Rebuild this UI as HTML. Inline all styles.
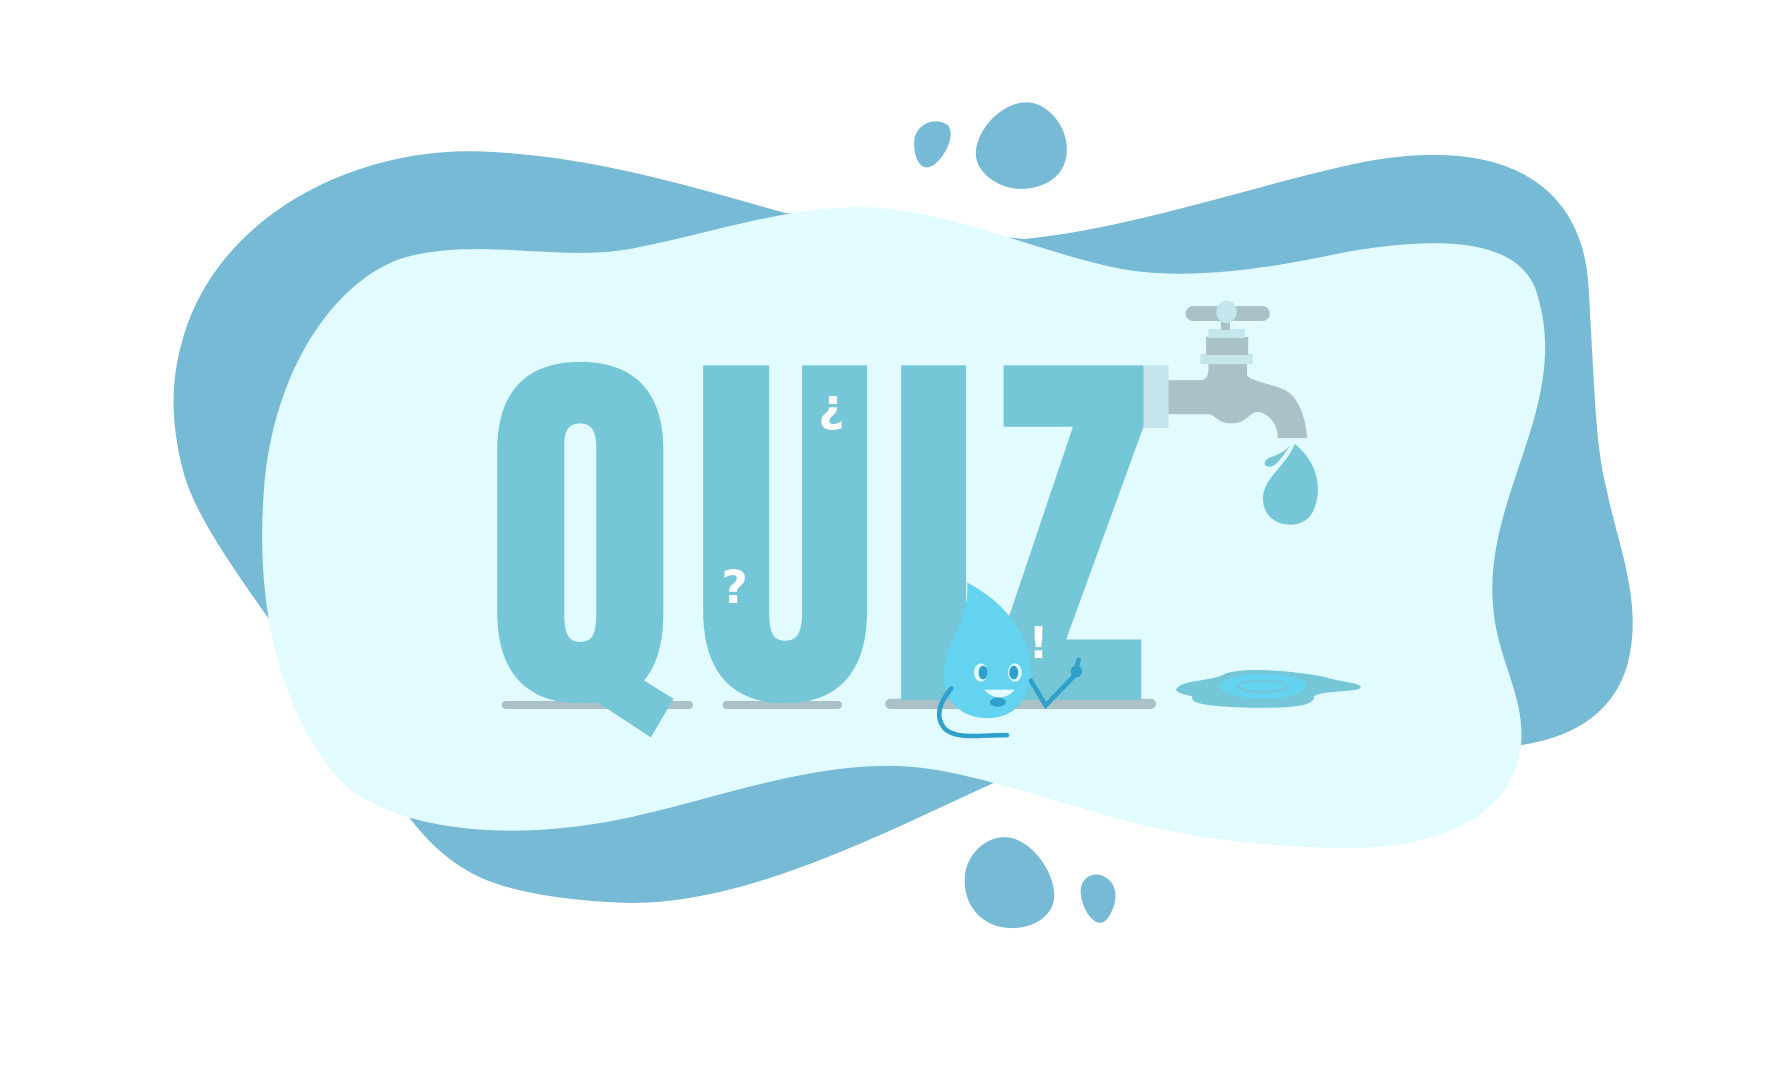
<!DOCTYPE html>
<html><head><meta charset="utf-8"><style>html,body{margin:0;padding:0;background:#fff;overflow:hidden}svg{display:block}</style></head>
<body>
<svg width="1775" height="1080" viewBox="0 0 1560 949" xmlns="http://www.w3.org/2000/svg">
<rect width="1560" height="949" fill="#fff"/>
<path fill="#77bad6" d="M160 300 C190 190 310 130 420 133 C520 136 610 165 690 187 L900 210 C1000 200 1110 160 1200 142 C1320 120 1390 160 1396 250 C1402 350 1402 390 1412 430 C1422 480 1445 530 1430 585 C1415 635 1370 650 1335 655 L880 685 C780 730 650 800 540 793 C480 790 440 780 420 770 C380 750 360 720 340 690 L230 535 C195 485 168 445 160 410 C150 370 150 335 160 300 Z"/>
<path fill="#e2fbff" d="M232 430 C240 320 300 240 360 225 C420 210 490 228 545 220 C610 210 690 180 760 182 C840 185 920 225 990 237 C1060 248 1140 230 1180 222 C1270 206 1340 210 1352 262 C1380 360 1300 440 1313 540 C1318 585 1345 620 1335 665 C1320 730 1240 748 1170 745 C1060 742 1000 725 950 710 C890 693 830 672 780 673 C700 673 620 705 545 720 C420 745 320 720 290 675 C240 610 225 520 232 430 Z"/>
<path fill="#77bad6" d="M804 120 C808 107 824 103 833 110 C842 120 825 148 814 147 C805 146 802 130 804 120 Z"/>
<path fill="#77bad6" d="M858 130 C862 108 885 88 905 90 C925 92 945 120 935 145 C927 165 895 172 875 160 C862 152 856 142 858 130 Z"/>
<path fill="#77bad6" d="M848 770 C850 748 870 733 887 736 C910 740 930 772 926 792 C922 810 900 818 882 815 C862 812 846 795 848 770 Z"/>
<path fill="#77bad6" d="M950 780 C952 770 962 766 970 770 C982 776 983 790 976 803 C970 815 962 812 956 803 C951 795 949 786 950 780 Z"/>
<g fill="#a9c1c7">
<rect x="441" y="616" width="168" height="7" rx="3.5"/>
<rect x="635" y="616" width="105" height="7" rx="3.5"/>
<rect x="778" y="614" width="238" height="9" rx="4.5"/>
</g>
<g fill="#75c6d6">
<path fill-rule="evenodd" d="M437 395 C437 345 462 318 510 318 C558 318 583 345 583 395 L583 538 C583 566 577 585 566 598 L592 614 L572 648 L525 617 C520 618 515 618 510 618 C462 618 437 590 437 538 Z M496 390 C496 378 500 372 510 372 C519 372 524 378 524 392 L524 540 C524 558 520 564 510 564 C500 564 496 558 496 540 Z"/>
<path d="M618 321 L676 321 L676 537 C676 557 680 563 690 563 C700 563 705 557 705 537 L705 321 L762 321 L762 537 C762 590 737 618 690 618 C643 618 618 590 618 537 Z"/>
<rect x="792" y="321" width="57" height="294"/>
<path d="M882 321 L1005 321 L1005 375 L937 562 L1003 562 L1003 615 L880 615 L880 562 L943 375 L882 375 Z"/>
</g>
<g fill="#fff" font-family="DejaVu Sans, sans-serif" font-weight="bold">
<text x="634" y="530" font-size="40">?</text>
<text x="719" y="370" font-size="40">¿</text>
<text x="904" y="578" font-size="38">!</text>
</g>
<g>
<rect x="1005" y="321" width="22" height="55" fill="#c4e6ec"/>
<path fill="#a9c1c7" d="M1027 334 L1055 334 C1060 334 1062 330 1062 325 L1062 318 L1096 318 L1096 330 C1100 335 1120 338 1130 343 C1145 352 1148 375 1149 385 L1123 385 C1123 370 1112 362 1105 362 C1098 362 1096 372 1082 372 C1070 372 1068 364 1062 364 L1027 364 Z"/>
<rect x="1055" y="311" width="46" height="9" fill="#c4e6ec"/>
<rect x="1060" y="296" width="37" height="16" fill="#a9c1c7"/>
<rect x="1062" y="289" width="32" height="8" fill="#c4e6ec"/>
<rect x="1073" y="282" width="8" height="8" fill="#a9c1c7"/>
<rect x="1042" y="269" width="74" height="13" rx="6.5" fill="#a9c1c7"/>
<ellipse cx="1078" cy="274" rx="9" ry="10" fill="#c4e6ec"/>
</g>
<path fill="#75c6d6" d="M1138 390 C1150 400 1160 415 1158 435 C1156 452 1148 461 1134 461 C1120 461 1110 452 1110 438 C1110 420 1130 410 1138 390 Z"/>
<path fill="#75c6d6" d="M1134 391 C1128 398 1122 400 1116 402 C1110 405 1110 410 1116 410 C1122 410 1128 400 1134 391 Z"/>
<path fill="#75c6d6" d="M1035 604 C1040 598 1065 598 1075 593 C1090 585 1140 590 1165 595 C1180 600 1200 600 1195 605 C1190 608 1160 607 1155 612 C1155 620 1140 622 1100 622 C1060 621 1045 618 1048 612 C1040 610 1030 608 1035 604 Z"/>
<ellipse cx="1110" cy="603" rx="38" ry="11" fill="#63d3f0"/>
<ellipse cx="1110" cy="603" rx="22" ry="5" fill="none" stroke="#75c6d6" stroke-width="2"/>
<g>
<path fill="#63d3f0" d="M850 512 C875 525 895 545 903 570 C912 600 900 630 870 631 C842 632 826 612 830 585 C834 560 852 545 850 512 Z"/>
<ellipse cx="862" cy="591" rx="6" ry="8" fill="#e2fbff"/>
<ellipse cx="892" cy="591" rx="6" ry="8" fill="#e2fbff"/>
<ellipse cx="864" cy="591" rx="4" ry="6" fill="#2f9fcc"/>
<ellipse cx="891" cy="591" rx="4" ry="6" fill="#2f9fcc"/>
<path d="M865 606 C872 615 885 615 892 606 Z" fill="#e2fbff"/>
<ellipse cx="877" cy="617" rx="7" ry="4" fill="#2f9fcc"/>
<path d="M836 605 C825 618 822 630 830 640 C840 650 860 646 885 646" fill="none" stroke="#2f9fcc" stroke-width="4" stroke-linecap="round"/>
<path d="M906 598 L919 620 L944 594 L948 580" fill="none" stroke="#2f9fcc" stroke-width="4" stroke-linecap="round"/>
<circle cx="946" cy="590" r="5" fill="#2f9fcc"/>
</g>
</svg>
</body></html>
